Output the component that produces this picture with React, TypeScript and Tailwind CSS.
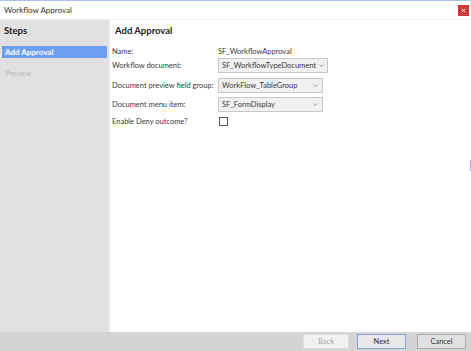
import React from "react";

function Select({ value, width }: { value: string; width: string }) {
  return (
    <div className={`flex h-[15px] ${width} items-center justify-between border border-[#c8c8c8] bg-[#f0f0f0] pl-[3px] pr-[4px]`}>
      <span className="whitespace-nowrap">{value}</span>
      <svg width="5" height="3" viewBox="0 0 5 3" className="ml-[3px] shrink-0">
        <path d="M0.5 0.5 L2.5 2.5 L4.5 0.5" fill="none" stroke="#8a8a8a" strokeWidth="0.8" />
      </svg>
    </div>
  );
}

export default function App() {
  return (
    <div
      className="flex h-[351px] w-[471px] flex-col overflow-hidden bg-white text-[7.5px] text-[#3a3a3a]"
      style={{ fontFamily: 'Lato, "Open Sans", sans-serif' }}
    >
      <div className="h-px bg-[#a8c4ea]" />
      <div className="flex h-[19px] items-center justify-between border-b border-[#ececec] pl-[4px] pr-[2px]">
        <span className="whitespace-nowrap text-[8px] text-[#333]">Workflow Approval</span>
        <div className="flex h-[11px] w-[11px] items-center justify-center bg-[#d2363a]">
          <svg width="5" height="5" viewBox="0 0 5 5">
            <path d="M0.8 0.8 L4.2 4.2 M4.2 0.8 L0.8 4.2" stroke="#fff" strokeWidth="1" />
          </svg>
        </div>
      </div>
      <div className="flex flex-1">
        <div className="flex w-[110px] flex-col border-r border-[#ececec] bg-[#e1e1e1] px-[2px]">
          <div className="pl-[2px] pt-[4px] text-[9.5px] font-bold text-[#222]">Steps</div>
          <div className="mt-[8px] flex h-[12px] items-center bg-[#6d9ff1] pl-[3px] text-[8px] font-bold text-white">Add Approval</div>
          <div className="mt-[10px] pl-[3px] text-[#b8b8b8]">Preview</div>
        </div>
        <div className="relative flex-1 pl-[2px]">
          <div className="pl-[3px] pt-[4px] text-[9.5px] font-bold text-[#222]">Add Approval</div>
          <div className="mt-[8px] grid grid-cols-[106px_auto] items-center whitespace-nowrap">
            <div className="h-[12px] leading-[12px]">Name:</div>
            <div className="h-[12px] leading-[12px]">SF_WorkflowApproval</div>
            <div className="flex h-[15px] items-center">Workflow document:</div>
            <div className="flex h-[15px] items-center"><Select value="SF_WorkflowTypeDocument" width="w-[110px]" /></div>
            <div className="mt-[4px] flex h-[17px] items-center">Document preview field group:</div>
            <div className="mt-[4px] flex h-[17px] items-center"><Select value="WorkFlow_TableGroup" width="w-[105px]" /></div>
            <div className="mt-[2px] flex h-[17px] items-center">Document menu item:</div>
            <div className="mt-[2px] flex h-[17px] items-center"><Select value="SF_FormDisplay" width="w-[105px]" /></div>
            <div className="flex h-[17px] items-center">Enable Deny outcome?</div>
            <div className="flex h-[17px] items-center pl-[1px]">
              <div className="h-[9px] w-[9px] border border-[#555] bg-white" />
            </div>
          </div>
          <div className="absolute right-0 top-[140px] h-[11px] w-px bg-[#b9a8d6]" />
        </div>
      </div>
      <div className="flex h-[19px] items-center justify-end gap-[8px] bg-[#d4d4d4] pr-[5px]">
        <div className="flex h-[15px] w-[46px] items-center justify-center border border-[#dcdcdc] bg-[#f2f2f2] text-[#a8a8a8]">Back</div>
        <div className="flex h-[15px] w-[49px] items-center justify-center border border-[#7fa7dc] bg-[#e8e8e8] text-[#333]">Next</div>
        <div className="ml-[3px] flex h-[15px] w-[49px] items-center justify-center border border-[#adadad] bg-[#e1e1e1] text-[#333]">Cancel</div>
      </div>
    </div>
  );
}
